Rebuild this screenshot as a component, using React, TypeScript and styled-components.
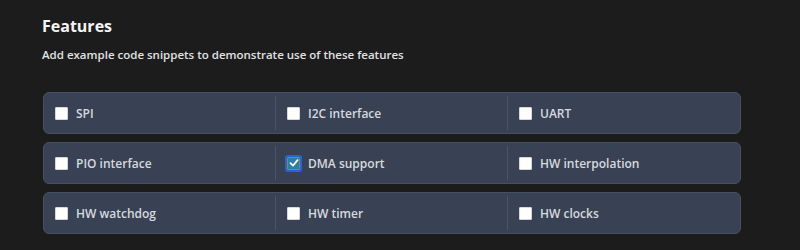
import styled, { createGlobalStyle } from "styled-components";

const GlobalStyle = createGlobalStyle`
  html, body {
    margin: 0;
    padding: 0;
    background: #1c1c1c;
  }
  body {
    font-family: "Open Sans", "Noto Sans", "Liberation Sans", sans-serif;
  }
`;

const Page = styled.div`
  width: 800px;
  height: 250px;
  box-sizing: border-box;
  padding: 16px 59px 0 42px;
  background: #1c1c1c;
`;

const Title = styled.h2`
  margin: 0;
  font-size: 16px;
  line-height: 20px;
  font-weight: 700;
  color: #f4f4f4;
`;

const Subtitle = styled.p`
  margin: 11px 0 0;
  font-size: 11.5px;
  line-height: 16px;
  font-weight: 600;
  color: #e2e2e2;
`;

const Rows = styled.div`
  display: flex;
  flex-direction: column;
  gap: 8px;
  margin-top: 29px;
  margin-left: 1px;
`;

const Row = styled.div`
  display: grid;
  grid-template-columns: repeat(3, 1fr);
  height: 42px;
  box-sizing: border-box;
  background: #394255;
  border: 1px solid #465063;
  border-radius: 6px;
`;

const Cell = styled.label<{ $first?: boolean }>`
  display: flex;
  align-items: center;
  gap: 8px;
  padding-left: 11px;
  position: relative;
  cursor: pointer;
  &::before {
    content: "";
    display: ${({ $first }) => ($first ? "none" : "block")};
    position: absolute;
    left: -1px;
    top: 3px;
    bottom: 3px;
    width: 1px;
    background: #4b5568;
  }
`;

const Box = styled.span<{ $checked?: boolean }>`
  width: 13px;
  height: 13px;
  box-sizing: border-box;
  display: flex;
  align-items: center;
  justify-content: center;
  background: ${({ $checked }) => ($checked ? "#2a7fa6" : "#ffffff")};
  border: ${({ $checked }) => ($checked ? "1px solid #8c8a3c" : "1px solid #d8d8d8")};
  outline: ${({ $checked }) => ($checked ? "2px solid #2463e0" : "none")};
  border-radius: 1px;
`;

const Label = styled.span`
  font-size: 12px;
  font-weight: 600;
  color: #d6d9de;
  white-space: nowrap;
`;

const features = [
  ["SPI", "I2C interface", "UART"],
  ["PIO interface", "DMA support", "HW interpolation"],
  ["HW watchdog", "HW timer", "HW clocks"],
];

const checked = new Set(["DMA support"]);

function Check() {
  return (
    <svg width="10" height="10" viewBox="0 0 10 10">
      <path d="M1.5 5.2 L4 7.6 L8.6 2.2" fill="none" stroke="#ffffff" strokeWidth="1.8" strokeLinecap="round" strokeLinejoin="round" />
    </svg>
  );
}

export default function App() {
  return (
    <>
      <GlobalStyle />
      <Page>
        <Title>Features</Title>
        <Subtitle>Add example code snippets to demonstrate use of these features</Subtitle>
        <Rows>
          {features.map((row, i) => (
            <Row key={i}>
              {row.map((name, j) => (
                <Cell key={name} $first={j === 0}>
                  <Box $checked={checked.has(name)}>{checked.has(name) && <Check />}</Box>
                  <Label>{name}</Label>
                </Cell>
              ))}
            </Row>
          ))}
        </Rows>
      </Page>
    </>
  );
}
